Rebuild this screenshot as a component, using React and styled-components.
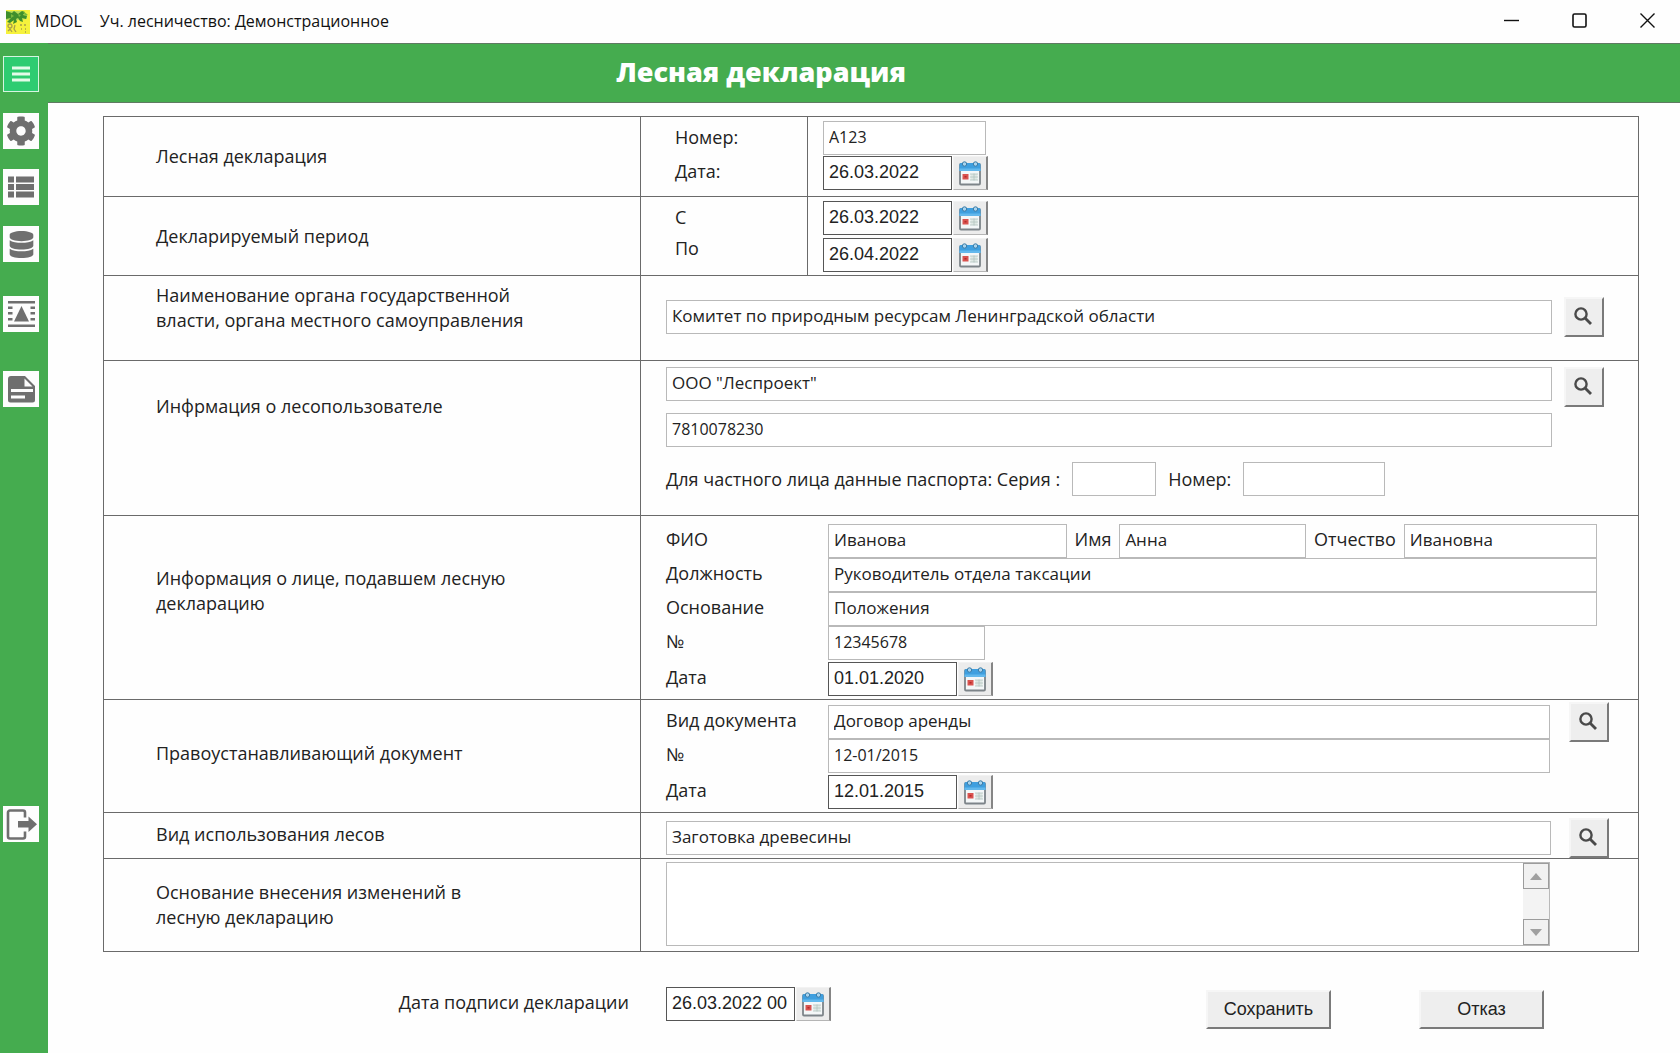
import React, { useState } from "react";
import styled, { createGlobalStyle } from "styled-components";
import { FaCog, FaDatabase } from "react-icons/fa";

const GlobalStyle = createGlobalStyle`
  * {
    box-sizing: border-box;
  }

  body {
    margin: 0;
    background: #fefefe;
    color: #222;
    font-family: "Open Sans", "Noto Sans", sans-serif;
    font-size: 18px;
    line-height: 25px;
  }

  button,
  input,
  textarea {
    margin: 0;
    font: inherit;
    color: inherit;
  }
`;

const Window = styled.div`
  min-height: 100vh;
  display: flex;
  flex-direction: column;
`;

// Title bar
const TitleBar = styled.header`
  display: flex;
  align-items: center;
  height: 43px;
  padding-left: 6px;
  color: #111;
  font-size: 16px;
`;

const AppName = styled.span`
  margin: 0 18px 0 5px;
`;

const WindowControls = styled.div`
  display: flex;
  align-self: flex-start;
  gap: 2px;
  margin-left: auto;
`;

const WindowButton = styled.button`
  display: flex;
  align-items: center;
  justify-content: center;
  width: 66px;
  height: 40px;
  padding: 0;
  border: none;
  background: none;
`;

const Body = styled.div`
  flex: 1;
  display: flex;
`;

// Sidebar
const Sidebar = styled.nav`
  flex: none;
  width: 48px;
  padding: 13px 3px;
  background: #45ac4f;
`;

const SideButton = styled.button`
  display: flex;
  align-items: center;
  justify-content: center;
  width: 36px;
  height: 36px;
  margin-top: ${({ $space }) => $space || 0}px;
  padding: 0;
  border: ${({ $active }) => ($active ? "1px solid #d6f5e0" : "none")};
  background: ${({ $active }) => ($active ? "#2ecc71" : "#fdfdfd")};
  color: #6f6f6f;
  cursor: pointer;
`;

const Page = styled.div`
  flex: 1;
  min-width: 0;
`;

const PageHeader = styled.div`
  display: flex;
  align-items: center;
  justify-content: center;
  height: 60px;
  padding: 0 206px 2px 0;
  border-top: 1px solid #5f7a62;
  border-bottom: 1px solid #5f7a62;
  background: #45ac4f;
`;

const PageTitle = styled.h1`
  margin: 0;
  color: #fff;
  font-size: 27px;
  font-weight: 800;
  line-height: 36px;
`;

const Main = styled.form`
  padding: 13px 41px 24px 55px;
`;

// Bordered form grid
const Sheet = styled.div`
  border: 1px solid #6a6a6a;
`;

const Row = styled.section`
  display: grid;
  grid-template-columns: 537px minmax(0, 1fr);
  min-height: ${({ $height }) => $height}px;

  & + & {
    border-top: 1px solid #6a6a6a;
  }
`;

const RowTitle = styled.div`
  display: flex;
  align-items: center;
  padding: 0 80px ${({ $lift }) => $lift || 0}px 52px;
  border-right: 1px solid #6a6a6a;
`;

const RowBody = styled.div`
  display: flex;
  flex-direction: column;
  gap: ${({ $gap }) => $gap || 0}px;
  padding: ${({ $top }) => $top}px ${({ $right }) => $right || 34}px 0 25px;
`;

const SplitBody = styled.div`
  display: grid;
  grid-template-columns: 167px minmax(0, 1fr);
`;

const SplitLabels = styled.div`
  display: flex;
  flex-direction: column;
  gap: ${({ $gap }) => $gap}px;
  padding: 5px 0 0 34px;
  border-right: 1px solid #6a6a6a;
`;

const SplitFields = styled.div`
  display: flex;
  flex-direction: column;
  gap: ${({ $gap }) => $gap}px;
  padding: 4px 0 0 15px;
`;

const Line = styled.div`
  display: flex;
  align-items: ${({ $align }) => $align || "flex-start"};
  gap: ${({ $gap }) => $gap || 0}px;
`;

const InnLine = styled(Line)`
  padding-right: 52px;
`;

const PassportLine = styled(Line)`
  margin-top: 9px;
`;

const LabeledLine = styled.div`
  display: grid;
  grid-template-columns: 162px minmax(0, 1fr);
  margin-top: ${({ $space }) => $space || 0}px;
`;

const DocumentFields = styled.div`
  flex: 1;
  min-width: 0;
  padding-top: 3px;
`;

const FieldLabel = styled.label`
  display: block;
  line-height: 30px;
  white-space: nowrap;
`;

const TextInput = styled.input`
  flex: ${({ $grow }) => ($grow ? `${$grow} 1 0` : "none")};
  width: ${({ $width }) => ($width ? `${$width}px` : "100%")};
  min-width: 0;
  height: 34px;
  padding: 0 5px 3px;
  border: 1px solid #b9b9b9;
  background: #fff;
  font-size: 17px;
`;

const NumberInput = styled(TextInput)`
  font-size: 16px;
`;

const DateInput = styled.input`
  width: 129px;
  height: 34px;
  padding: 0 5px 2px;
  border: 1px solid #555;
  outline: 0;
  background: #fff;
  font-family: "Liberation Sans", Arial, sans-serif;
  font-size: 18px;
`;

const CalendarButton = styled.button`
  display: flex;
  align-items: center;
  justify-content: center;
  width: 35px;
  height: 34px;
  padding: 0;
  border: solid;
  border-width: 1px 2px 1px 1px;
  border-color: #f2f2f2 #858585 #b5b5b5 #f2f2f2;
  background: #ececec;
  cursor: pointer;
`;

const RaisedButton = styled.button`
  display: flex;
  align-items: center;
  justify-content: center;
  border: 2px solid;
  border-color: #f6f6f6 #7a7a7a #7a7a7a #f6f6f6;
  background: #eee;
  cursor: pointer;
`;

const SearchButton = styled(RaisedButton)`
  flex: none;
  width: 40px;
  height: 40px;
  padding: 0 3px 3px 0;
  color: #4a4a4a;
`;

const ActionButton = styled(RaisedButton)`
  width: 125px;
  height: 39px;
  padding: 0;
  font-family: "Liberation Sans", Arial, sans-serif;
  font-size: 18px;
`;

const CommentBox = styled.div`
  display: flex;
  height: 84px;
  margin-right: 54px;
  border: 1px solid #b9b9b9;
`;

const CommentInput = styled.textarea`
  flex: 1;
  min-width: 0;
  padding: 4px 5px;
  border: none;
  background: #fff;
  font-size: 17px;
  resize: none;
`;

const ScrollTrack = styled.div`
  display: flex;
  flex-direction: column;
  justify-content: space-between;
  width: 26px;
  background: #f3f3f3;
`;

const ScrollButton = styled.button`
  display: flex;
  align-items: center;
  justify-content: center;
  height: 26px;
  padding: 0;
  border: 1px solid #9c9c9c;
  background: #f1f1f1;
`;

const Footer = styled.div`
  display: flex;
  align-items: flex-start;
  margin-top: 35px;
  padding-right: 95px;
`;

const FooterLabel = styled(FieldLabel)`
  width: 563px;
  padding-right: 37px;
  text-align: right;
`;

const Actions = styled.div`
  display: flex;
  gap: 88px;
  margin: 3px 0 0 auto;
`;

const LogoIcon = () => (
  <svg width="24" height="24" viewBox="0 0 24 24" aria-hidden="true">
    <rect width="24" height="24" fill="#f6f23c" />
    <path d="M0 1h15l6 3v5l-9 1-5 1-7-1z" fill="#b9dd5a" />
    <path
      d="M0 1l6 2 2-2 4 3 4-3 3 1-2 3 4 1-1 3-4-1 1 4-3-1-2-3-2 1 1 3-4 2 1-4-4 3-3-1 4-4-5 1z"
      fill="#3f8f2c"
    />
    <path d="M5 4l3 2-3 2zM12 4l3 1-2 2z" fill="#79b83e" />
    <path d="M17 1l5 4-3 1z" fill="#7dbb3a" />
    <g fill="none" stroke="#a9a04a" strokeWidth="1.3">
      <circle cx="4" cy="16" r="2" />
      <path d="M2 21l2-2 2 3M9 15l-1 4 2 3M14 15h2M18 15h2M15 19h1M19 19h1M19 22h1" />
    </g>
  </svg>
);

const MenuIcon = () => (
  <svg width="18" height="16" viewBox="0 0 18 16" aria-hidden="true">
    <path d="M0 0.5h18v3H0zM0 6.5h18v3H0zM0 12.5h18v3H0z" fill="#e4fbe9" />
  </svg>
);

const ListIcon = () => (
  <svg width="26" height="22" viewBox="0 0 26 22" fill="currentColor" aria-hidden="true">
    <path d="M0 0.5h6v6H0zM0 8h6v6H0zM0 15.500h6v6H0zM8 0.500h18v6H8zM8 8h18v6H8zM8 15.500h18v6H8z" />
  </svg>
);

const WrapTextIcon = () => (
  <svg width="28" height="28" viewBox="0 0 28 28" fill="currentColor" aria-hidden="true">
    <path d="M1 1h27v2.500H1zM1 24.500h27V27H1z" />
    <path d="M14.500 6l7.500 15.500H7z" />
    <path d="M1 6.500h4.500V9H1zM1 12h4.500v2.500H1zM1 18h4.500v2.500H1zM23.500 6.500H28V9h-4.500zM23.500 12H28v2.500h-4.500zM23.500 18H28v2.500h-4.500z" />
  </svg>
);

const DocumentIcon = () => (
  <svg width="28" height="28" viewBox="0 0 28 28" aria-hidden="true">
    <path
      d="M4 1h14l10 10v14a2.500 2.500 0 0 1-2.500 2.500H3.500A2.500 2.500 0 0 1 1 25V4a3 3 0 0 1 3-3z"
      fill="currentColor"
    />
    <path d="M17.500 3.500v8h8zM4 14h22v3H4zM4 20.500h14v3H4z" fill="#fdfdfd" />
  </svg>
);

const ExitIcon = () => (
  <svg width="32" height="32" viewBox="0 0 32 32" aria-hidden="true">
    <path
      d="M20 9.500V4.500a2 2 0 0 0-2-2H5a2 2 0 0 0-2 2v24a2 2 0 0 0 2 2h13a2 2 0 0 0 2-2v-5"
      fill="none"
      stroke="currentColor"
      strokeWidth="2.600"
    />
    <path d="M13 13h10.500V8.500L32 16.200 23.500 24v-4.500H13z" fill="currentColor" />
  </svg>
);

const SearchIcon = () => (
  <svg width="18" height="18" viewBox="0 0 18 18" aria-hidden="true">
    <circle cx="7" cy="7" r="5.600" fill="none" stroke="currentColor" strokeWidth="2.400" />
    <path d="M11 11l6 6" stroke="currentColor" strokeWidth="2.800" />
  </svg>
);

const CalendarIcon = () => (
  <svg width="22" height="26" viewBox="0 0 22 26" aria-hidden="true">
    <rect x="1" y="4" width="20" height="20.500" rx="1" fill="#f4f7f8" stroke="#7d8489" strokeWidth="1.800" />
    <path d="M0.500 4.500a1.500 1.500 0 0 1 1.500-1.500h18a1.500 1.500 0 0 1 1.500 1.500V11h-21z" fill="#3f9fdf" />
    <path d="M0.500 8.500h21V11h-21z" fill="#63b8ec" />
    <circle cx="5.500" cy="4" r="2.200" fill="#a9d4ee" stroke="#3b7ba6" />
    <circle cx="16.500" cy="4" r="2.200" fill="#a9d4ee" stroke="#3b7ba6" />
    <path d="M11.500 14h7v6h-7z" fill="#dfe8e4" />
    <path d="M11 14h8M11 17h8M11 20h8M15 13.500v7" stroke="#b3c4bf" strokeWidth="0.800" />
    <rect x="3.500" y="14" width="6" height="5.500" fill="#d9534f" />
    <path d="M5.500 16h2v1.500h-2z" fill="#b52b2b" />
  </svg>
);

const DateField = ({ id, name, value, onChange }) => (
  <Line $gap={1}>
    <DateInput id={id} name={name} value={value} onChange={onChange} />
    <CalendarButton type="button" aria-label="Календарь">
      <CalendarIcon />
    </CalendarButton>
  </Line>
);

const SearchAction = () => (
  <SearchButton type="button" aria-label="Поиск">
    <SearchIcon />
  </SearchButton>
);

const initialValues = {
  number: "А123",
  date: "26.03.2022",
  periodFrom: "26.03.2022",
  periodTo: "26.04.2022",
  authority: "Комитет по природным ресурсам Ленинградской области",
  company: 'ООО "Леспроект"',
  inn: "7810078230",
  passportSeries: "",
  passportNumber: "",
  lastName: "Иванова",
  firstName: "Анна",
  middleName: "Ивановна",
  position: "Руководитель отдела таксации",
  basis: "Положения",
  basisNumber: "12345678",
  basisDate: "01.01.2020",
  docType: "Договор аренды",
  docNumber: "12-01/2015",
  docDate: "12.01.2015",
  forestUse: "Заготовка древесины",
  changeReason: "",
  signDate: "26.03.2022 00",
};

const App = () => {
  const [values, setValues] = useState(initialValues);

  const handleChange = (e) => {
    setValues({ ...values, [e.target.name]: e.target.value });
  };

  const field = (name) => ({
    id: name,
    name,
    value: values[name],
    onChange: handleChange,
  });

  return (
    <>
      <GlobalStyle />
      <Window>
        <TitleBar>
          <LogoIcon />
          <AppName>MDOL</AppName>
          <span>Уч. лесничество: Демонстрационное</span>
          <WindowControls>
            <WindowButton type="button" aria-label="Свернуть">
              <svg width="15" height="15" viewBox="0 0 15 15">
                <path d="M0 7.500h15" stroke="#111" strokeWidth="1.400" />
              </svg>
            </WindowButton>
            <WindowButton type="button" aria-label="Развернуть">
              <svg width="15" height="15" viewBox="0 0 15 15">
                <rect x="1" y="1" width="13" height="13" rx="1.500" fill="none" stroke="#111" strokeWidth="1.600" />
              </svg>
            </WindowButton>
            <WindowButton type="button" aria-label="Закрыть">
              <svg width="15" height="15" viewBox="0 0 15 15">
                <path d="M0.500 0.500l14 14M14.500 0.500l-14 14" stroke="#111" strokeWidth="1.400" />
              </svg>
            </WindowButton>
          </WindowControls>
        </TitleBar>

        <Body>
          <Sidebar>
            <SideButton type="button" aria-label="Меню" $active>
              <MenuIcon />
            </SideButton>
            <SideButton type="button" aria-label="Настройки" $space={21}>
              <FaCog size={30} />
            </SideButton>
            <SideButton type="button" aria-label="Список" $space={20}>
              <ListIcon />
            </SideButton>
            <SideButton type="button" aria-label="База данных" $space={21}>
              <FaDatabase size={27} />
            </SideButton>
            <SideButton type="button" aria-label="Чертёж" $space={34}>
              <WrapTextIcon />
            </SideButton>
            <SideButton type="button" aria-label="Документ" $space={39}>
              <DocumentIcon />
            </SideButton>
            <SideButton type="button" aria-label="Выход" $space={399}>
              <ExitIcon />
            </SideButton>
          </Sidebar>

          <Page>
            <PageHeader>
              <PageTitle>Лесная декларация</PageTitle>
            </PageHeader>

            <Main onSubmit={(e) => e.preventDefault()}>
              <Sheet>
                <Row $height={79}>
                  <RowTitle>Лесная декларация</RowTitle>
                  <SplitBody>
                    <SplitLabels $gap={4}>
                      <FieldLabel htmlFor="number">Номер:</FieldLabel>
                      <FieldLabel htmlFor="date">Дата:</FieldLabel>
                    </SplitLabels>
                    <SplitFields $gap={1}>
                      <NumberInput $width={163} {...field("number")} />
                      <DateField {...field("date")} />
                    </SplitFields>
                  </SplitBody>
                </Row>

                <Row $height={79}>
                  <RowTitle>Декларируемый период</RowTitle>
                  <SplitBody>
                    <SplitLabels $gap={1}>
                      <FieldLabel htmlFor="periodFrom">С</FieldLabel>
                      <FieldLabel htmlFor="periodTo">По</FieldLabel>
                    </SplitLabels>
                    <SplitFields $gap={3}>
                      <DateField {...field("periodFrom")} />
                      <DateField {...field("periodTo")} />
                    </SplitFields>
                  </SplitBody>
                </Row>

                <Row $height={85}>
                  <RowTitle as="label" htmlFor="authority" $lift={20}>
                    Наименование органа государственной власти, органа местного самоуправления
                  </RowTitle>
                  <RowBody $top={21}>
                    <Line $gap={12} $align="center">
                      <TextInput $grow={1} {...field("authority")} />
                      <SearchAction />
                    </Line>
                  </RowBody>
                </Row>

                <Row $height={155}>
                  <RowTitle $lift={63}>Инфрмация о лесопользователе</RowTitle>
                  <RowBody $top={6} $gap={6}>
                    <Line $gap={12}>
                      <TextInput aria-label="Лесопользователь" $grow={1} {...field("company")} />
                      <SearchAction />
                    </Line>
                    <InnLine>
                      <NumberInput aria-label="ИНН" $grow={1} {...field("inn")} />
                    </InnLine>
                    <PassportLine $gap={12} $align="center">
                      <FieldLabel htmlFor="passportSeries">
                        Для частного лица данные паспорта: Серия :
                      </FieldLabel>
                      <NumberInput $width={84} {...field("passportSeries")} />
                      <FieldLabel htmlFor="passportNumber">Номер:</FieldLabel>
                      <NumberInput $width={142} {...field("passportNumber")} />
                    </PassportLine>
                  </RowBody>
                </Row>

                <Row $height={184}>
                  <RowTitle $lift={33}>Информация о лице, подавшем лесную декларацию</RowTitle>
                  <RowBody $top={8} $right={41}>
                    <LabeledLine>
                      <FieldLabel htmlFor="lastName">ФИО</FieldLabel>
                      <Line $gap={8}>
                        <TextInput $grow={240} {...field("lastName")} />
                        <FieldLabel htmlFor="firstName">Имя</FieldLabel>
                        <TextInput $grow={185} {...field("firstName")} />
                        <FieldLabel htmlFor="middleName">Отчество</FieldLabel>
                        <TextInput $grow={192} {...field("middleName")} />
                      </Line>
                    </LabeledLine>
                    <LabeledLine>
                      <FieldLabel htmlFor="position">Должность</FieldLabel>
                      <TextInput {...field("position")} />
                    </LabeledLine>
                    <LabeledLine>
                      <FieldLabel htmlFor="basis">Основание</FieldLabel>
                      <TextInput {...field("basis")} />
                    </LabeledLine>
                    <LabeledLine>
                      <FieldLabel htmlFor="basisNumber">№</FieldLabel>
                      <NumberInput $width={157} {...field("basisNumber")} />
                    </LabeledLine>
                    <LabeledLine $space={2}>
                      <FieldLabel htmlFor="basisDate">Дата</FieldLabel>
                      <DateField {...field("basisDate")} />
                    </LabeledLine>
                  </RowBody>
                </Row>

                <Row $height={113}>
                  <RowTitle $lift={6}>Правоустанавливающий документ</RowTitle>
                  <RowBody $top={2} $right={29}>
                    <Line $gap={19}>
                      <DocumentFields>
                        <LabeledLine>
                          <FieldLabel htmlFor="docType">Вид документа</FieldLabel>
                          <TextInput {...field("docType")} />
                        </LabeledLine>
                        <LabeledLine>
                          <FieldLabel htmlFor="docNumber">№</FieldLabel>
                          <NumberInput {...field("docNumber")} />
                        </LabeledLine>
                        <LabeledLine $space={2}>
                          <FieldLabel htmlFor="docDate">Дата</FieldLabel>
                          <DateField {...field("docDate")} />
                        </LabeledLine>
                      </DocumentFields>
                      <SearchAction />
                    </Line>
                  </RowBody>
                </Row>

                <Row $height={46}>
                  <RowTitle as="label" htmlFor="forestUse" $lift={3}>
                    Вид использования лесов
                  </RowTitle>
                  <RowBody $top={5} $right={29}>
                    <Line $gap={18} $align="center">
                      <TextInput $grow={1} {...field("forestUse")} />
                      <SearchAction />
                    </Line>
                  </RowBody>
                </Row>

                <Row $height={93}>
                  <RowTitle as="label" htmlFor="changeReason">
                    Основание внесения изменений в
                    <br />
                    лесную декларацию
                  </RowTitle>
                  <RowBody $top={3}>
                    <CommentBox>
                      <CommentInput {...field("changeReason")} />
                      <ScrollTrack>
                        <ScrollButton type="button" aria-label="Вверх">
                          <svg width="12" height="7" viewBox="0 0 12 7">
                            <path d="M6 0l6 7H0z" fill="#a0a0a0" />
                          </svg>
                        </ScrollButton>
                        <ScrollButton type="button" aria-label="Вниз">
                          <svg width="12" height="7" viewBox="0 0 12 7">
                            <path d="M6 7l6-7H0z" fill="#a0a0a0" />
                          </svg>
                        </ScrollButton>
                      </ScrollTrack>
                    </CommentBox>
                  </RowBody>
                </Row>
              </Sheet>

              <Footer>
                <FooterLabel htmlFor="signDate">Дата подписи декларации</FooterLabel>
                <DateField {...field("signDate")} />
                <Actions>
                  <ActionButton type="submit">Сохранить</ActionButton>
                  <ActionButton type="button">Отказ</ActionButton>
                </Actions>
              </Footer>
            </Main>
          </Page>
        </Body>
      </Window>
    </>
  );
};

export default App;
